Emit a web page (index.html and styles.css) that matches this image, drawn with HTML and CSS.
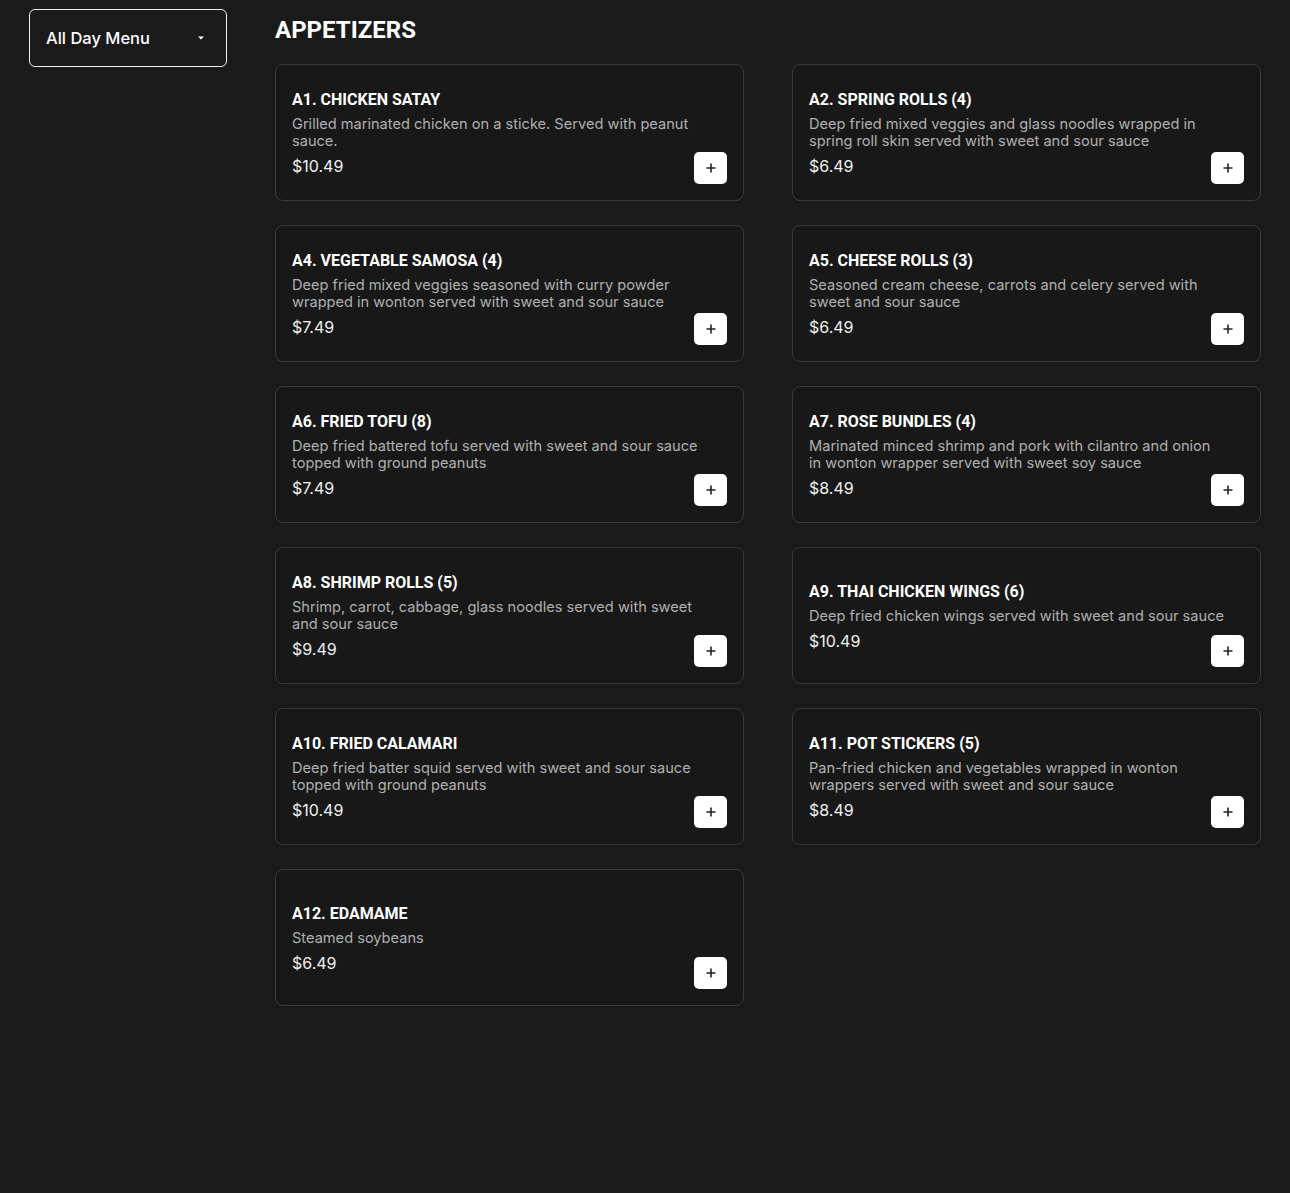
FILE: index.html
```html
<!DOCTYPE html>
<html lang="en">
<head>
<meta charset="utf-8">
<title>All Day Menu</title>
<link rel="stylesheet" href="styles.css">
</head>
<body>
<div class="page">
  <aside class="sidebar">
    <button class="select">
      <span>All Day Menu</span>
      <svg class="caret" width="10" height="6" viewBox="0 0 10 6"><path d="M2 1.5h6L5 4.5z" fill="#fff"/></svg>
    </button>
  </aside>
  <main class="main">
    <h1 class="heading">APPETIZERS</h1>
    <div class="grid">
      <div class="card"><div class="info"><h2 class="title">A1. CHICKEN SATAY</h2><p class="desc">Grilled marinated chicken on a sticke. Served with peanut<br>sauce.</p><div class="price">$10.49</div></div><button class="add"><svg width="12" height="12" viewBox="0 0 12 12"><path d="M6 1.5v9M1.5 6h9" stroke="#222" stroke-width="1.6"/></svg></button></div>
      <div class="card"><div class="info"><h2 class="title">A2. SPRING ROLLS (4)</h2><p class="desc">Deep fried mixed veggies and glass noodles wrapped in<br>spring roll skin served with sweet and sour sauce</p><div class="price">$6.49</div></div><button class="add"><svg width="12" height="12" viewBox="0 0 12 12"><path d="M6 1.5v9M1.5 6h9" stroke="#222" stroke-width="1.6"/></svg></button></div>
      <div class="card"><div class="info"><h2 class="title">A4. VEGETABLE SAMOSA (4)</h2><p class="desc">Deep fried mixed veggies seasoned with curry powder<br>wrapped in wonton served with sweet and sour sauce</p><div class="price">$7.49</div></div><button class="add"><svg width="12" height="12" viewBox="0 0 12 12"><path d="M6 1.5v9M1.5 6h9" stroke="#222" stroke-width="1.6"/></svg></button></div>
      <div class="card"><div class="info"><h2 class="title">A5. CHEESE ROLLS (3)</h2><p class="desc">Seasoned cream cheese, carrots and celery served with<br>sweet and sour sauce</p><div class="price">$6.49</div></div><button class="add"><svg width="12" height="12" viewBox="0 0 12 12"><path d="M6 1.5v9M1.5 6h9" stroke="#222" stroke-width="1.6"/></svg></button></div>
      <div class="card"><div class="info"><h2 class="title">A6. FRIED TOFU (8)</h2><p class="desc">Deep fried battered tofu served with sweet and sour sauce<br>topped with ground peanuts</p><div class="price">$7.49</div></div><button class="add"><svg width="12" height="12" viewBox="0 0 12 12"><path d="M6 1.5v9M1.5 6h9" stroke="#222" stroke-width="1.6"/></svg></button></div>
      <div class="card"><div class="info"><h2 class="title">A7. ROSE BUNDLES (4)</h2><p class="desc">Marinated minced shrimp and pork with cilantro and onion<br>in wonton wrapper served with sweet soy sauce</p><div class="price">$8.49</div></div><button class="add"><svg width="12" height="12" viewBox="0 0 12 12"><path d="M6 1.5v9M1.5 6h9" stroke="#222" stroke-width="1.6"/></svg></button></div>
      <div class="card"><div class="info"><h2 class="title">A8. SHRIMP ROLLS (5)</h2><p class="desc">Shrimp, carrot, cabbage, glass noodles served with sweet<br>and sour sauce</p><div class="price">$9.49</div></div><button class="add"><svg width="12" height="12" viewBox="0 0 12 12"><path d="M6 1.5v9M1.5 6h9" stroke="#222" stroke-width="1.6"/></svg></button></div>
      <div class="card"><div class="info"><h2 class="title">A9. THAI CHICKEN WINGS (6)</h2><p class="desc">Deep fried chicken wings served with sweet and sour sauce</p><div class="price">$10.49</div></div><button class="add"><svg width="12" height="12" viewBox="0 0 12 12"><path d="M6 1.5v9M1.5 6h9" stroke="#222" stroke-width="1.6"/></svg></button></div>
      <div class="card"><div class="info"><h2 class="title">A10. FRIED CALAMARI</h2><p class="desc">Deep fried batter squid served with sweet and sour sauce<br>topped with ground peanuts</p><div class="price">$10.49</div></div><button class="add"><svg width="12" height="12" viewBox="0 0 12 12"><path d="M6 1.5v9M1.5 6h9" stroke="#222" stroke-width="1.6"/></svg></button></div>
      <div class="card"><div class="info"><h2 class="title">A11. POT STICKERS (5)</h2><p class="desc">Pan-fried chicken and vegetables wrapped in wonton<br>wrappers served with sweet and sour sauce</p><div class="price">$8.49</div></div><button class="add"><svg width="12" height="12" viewBox="0 0 12 12"><path d="M6 1.5v9M1.5 6h9" stroke="#222" stroke-width="1.6"/></svg></button></div>
      <div class="card"><div class="info"><h2 class="title">A12. EDAMAME</h2><p class="desc">Steamed soybeans</p><div class="price">$6.49</div></div><button class="add"><svg width="12" height="12" viewBox="0 0 12 12"><path d="M6 1.5v9M1.5 6h9" stroke="#222" stroke-width="1.6"/></svg></button></div>
    </div>
  </main>
</div>
</body>
</html>
```
FILE: styles.css
```css
* { box-sizing: border-box; }
html, body {
  margin: 0;
  background: #1a1a1a;
  color: #fff;
  min-height: 1193px;
}
.page {
  display: flex;
  gap: 48px;
  padding: 9px 29px 0 29px;
}
.sidebar {
  width: 198px;
  flex: none;
}
.select {
  width: 198px;
  height: 58px;
  display: flex;
  align-items: center;
  justify-content: space-between;
  padding: 0 20px 0 16px;
  background: #1a1a1a;
  border: 1px solid #f0f0f0;
  border-radius: 6px;
  color: #fff;
  font-family: Inter, "Noto Sans", sans-serif;
  font-size: 16.5px;
  font-weight: 500;
}
.caret { display: block; }
.main {
  flex: 1;
  min-width: 0;
}
.heading {
  margin: 7px 0 20px 0;
  font-family: Roboto, sans-serif;
  font-weight: 700;
  font-size: 24px;
  line-height: 28px;
}
.grid {
  display: grid;
  grid-template-columns: 1fr 1fr;
  column-gap: 48px;
  row-gap: 24px;
}
.card {
  display: grid;
  height: 137px;
  padding: 16px;
  border: 1px solid #3a3a3a;
  border-radius: 8px;
  background: #181818;
}
.info {
  grid-area: 1 / 1;
  align-self: center;
  padding-top: 3px;
}
.title {
  margin: 0 0 7px 0;
  font-family: Roboto, sans-serif;
  font-weight: 700;
  font-size: 16px;
  line-height: 19px;
  color: #fff;
}
.desc {
  margin: 1px 0 4px 0;
  font-family: Inter, "Noto Sans", sans-serif;
  font-size: 14.6px;
  line-height: 17px;
  color: #b0b0b0;
  white-space: nowrap;
}
.price {
  font-family: Inter, "Noto Sans", sans-serif;
  font-size: 16px;
  line-height: 24px;
  color: #f0f0f0;
}
.add {
  grid-area: 1 / 1;
  justify-self: end;
  align-self: end;
  width: 33px;
  height: 32px;
  padding: 0;
  border: none;
  border-radius: 5px;
  background: #fff;
  display: flex;
  align-items: center;
  justify-content: center;
}
.add svg { display: block; }
```
